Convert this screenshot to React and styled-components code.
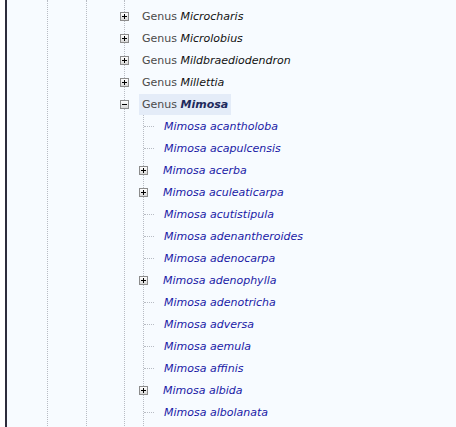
import React from "react";
import styled, { createGlobalStyle } from "styled-components";

const GlobalStyle = createGlobalStyle`
  html, body {
    margin: 0;
    padding: 0;
    background: #ffffff;
    overflow: hidden;
  }
  body {
    font-family: "DejaVu Sans", Verdana, sans-serif;
    font-size: 11px;
  }
`;

const Page = styled.div`
  padding-left: 5px;
  height: 427px;
  overflow: hidden;
`;

const Panel = styled.div`
  height: 100%;
  border-left: 2px solid #2c2c3c;
  background: #f7fbff;
  padding-left: 40px;
`;

// one indentation column with its dotted guide line
const Level = styled.div`
  margin-left: ${(p) => p.$indent || 0}px;
  border-left: 1px dotted #b8bcc4;
  min-height: ${(p) => (p.$fill ? "427px" : "0")};
  padding-top: ${(p) => p.$top || 0}px;
`;

const Row = styled.div`
  display: flex;
  align-items: center;
  height: 22px;
  white-space: nowrap;
`;

const Toggle = styled.span`
  box-sizing: border-box;
  width: 9px;
  height: 9px;
  margin-left: -5px;
  border: 1px solid #8c8c8c;
  background: linear-gradient(#ffffff, #d8d8d8);
  flex-shrink: 0;
  position: relative;

  &::before {
    content: "";
    position: absolute;
    width: 5px;
    height: 1px;
    background: #000;
    left: 1px;
    top: 3px;
  }
  &::after {
    content: "";
    display: ${(p) => (p.$open ? "none" : "block")};
    position: absolute;
    width: 1px;
    height: 5px;
    background: #000;
    left: 3px;
    top: 1px;
  }
`;

const Connector = styled.span`
  width: 10px;
  border-top: 1px dotted #b8bcc4;
  flex-shrink: 0;
`;

const GenusLabel = styled.span`
  margin-left: 10px;
  padding: 0 3px;
  line-height: 21px;
  color: #4a4a4a;
  background: ${(p) => (p.$active ? "#e4ecf8" : "transparent")};

  em {
    color: ${(p) => (p.$active ? "#1e2a5c" : "#111")};
    font-weight: ${(p) => (p.$active ? 700 : 400)};
  }
`;

const SpeciesLabel = styled.span`
  margin-left: ${(p) => (p.$leaf ? 10 : 15)}px;
  color: #1a1aa6;
  font-style: italic;
`;

const genera = ["Microcharis", "Microlobius", "Mildbraediodendron", "Millettia"];

const species = [
  ["acantholoba", false],
  ["acapulcensis", false],
  ["acerba", true],
  ["aculeaticarpa", true],
  ["acutistipula", false],
  ["adenantheroides", false],
  ["adenocarpa", false],
  ["adenophylla", true],
  ["adenotricha", false],
  ["adversa", false],
  ["aemula", false],
  ["affinis", false],
  ["albida", true],
  ["albolanata", false],
];

const App = () => {
  return (
    <Page>
      <GlobalStyle />
      <Panel>
        <Level $fill>
          <Level $indent={38} $fill>
            <Level $indent={37} $fill $top={5}>
              {genera.map((g) => (
                <Row key={g}>
                  <Toggle />
                  <GenusLabel>
                    Genus <em>{g}</em>
                  </GenusLabel>
                </Row>
              ))}
              <Row>
                <Toggle $open />
                <GenusLabel $active>
                  Genus <em>Mimosa</em>
                </GenusLabel>
              </Row>
              <Level $indent={18} $fill>
                {species.map(([name, expandable]) => (
                  <Row key={name}>
                    {expandable ? <Toggle /> : <Connector />}
                    <SpeciesLabel $leaf={!expandable}>Mimosa {name}</SpeciesLabel>
                  </Row>
                ))}
              </Level>
            </Level>
          </Level>
        </Level>
      </Panel>
    </Page>
  );
};

export default App;
